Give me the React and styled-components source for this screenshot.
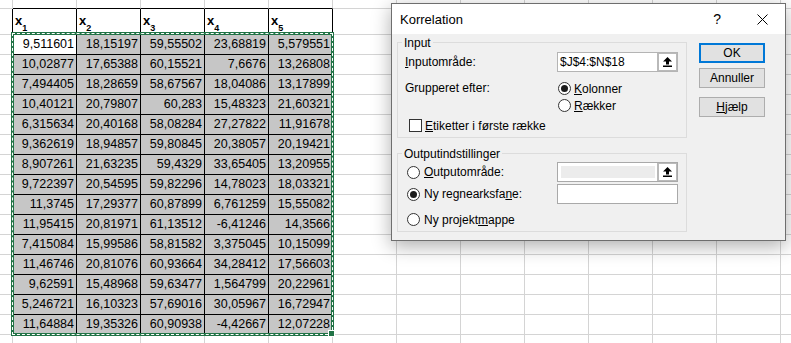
import React from 'react';
import styled, {createGlobalStyle} from 'styled-components';

const GlobalStyle = createGlobalStyle`
  html, body {
    margin: 0;
    padding: 0;
    background: #fff;
    overflow: hidden;
  }
`;

const data = [
  ['9,511601', '18,15197', '59,55502', '23,68819', '5,579551'],
  ['10,02877', '17,65388', '60,15521', '7,6676', '13,26808'],
  ['7,494405', '18,28659', '58,67567', '18,04086', '13,17899'],
  ['10,40121', '20,79807', '60,283', '15,48323', '21,60321'],
  ['6,315634', '20,40168', '58,08284', '27,27822', '11,91678'],
  ['9,362619', '18,94857', '59,80845', '20,38057', '20,19421'],
  ['8,907261', '21,63235', '59,4329', '33,65405', '13,20955'],
  ['9,722397', '20,54595', '59,82296', '14,78023', '18,03321'],
  ['11,3745', '17,29377', '60,87899', '6,761259', '15,55082'],
  ['11,95415', '20,81971', '61,13512', '-6,41246', '14,3566'],
  ['7,415084', '15,99586', '58,81582', '3,375045', '10,15099'],
  ['11,46746', '20,81076', '60,93664', '34,28412', '17,56603'],
  ['9,62591', '15,48968', '59,63477', '1,564799', '20,22961'],
  ['5,246721', '16,10323', '57,69016', '30,05967', '16,72947'],
  ['11,64884', '19,35326', '60,90938', '-4,42667', '12,07228'],
];

const COLS = 14;
const ROWS = 18;

const Sheet = styled.div`
  position: relative;
  width: 791px;
  height: 343px;
  overflow: hidden;
  display: grid;
  grid-template-columns: 13px repeat(13, 64px);
  grid-template-rows: 9px 26px repeat(16, 20px);
`;

const Cell = styled.div`
  box-sizing: border-box;
  border-right: 1px solid ${(p) => (p.$rightDark ? '#000' : '#d4d4d4')};
  border-bottom: 1px solid ${(p) => (p.$bottomDark ? '#000' : '#d4d4d4')};
  background: ${(p) => p.$fill || '#fff'};
  font: 12.5px/19px 'Liberation Sans', Arial, sans-serif;
  color: #000;
  text-align: right;
  padding-right: 2px;
  white-space: nowrap;
  overflow: hidden;
`;

const HeaderCell = styled(Cell)`
  display: flex;
  align-items: flex-end;
  padding: 0 0 6px 2px;
  font-size: 13px;
  font-weight: bold;
  line-height: 14px;
  text-align: left;

  sub {
    font-size: 9px;
    vertical-align: -3px;
    line-height: 0;
  }
`;

const Selection = styled.div`
  position: absolute;
  left: 11px;
  top: 32px;
  width: 323px;
  height: 304px;
  box-sizing: border-box;
  border: 3px solid #217346;
  pointer-events: none;

  &::after {
    content: '';
    position: absolute;
    inset: -2px;
    border: 1px dashed #fff;
  }
`;

const FillHandle = styled.div`
  position: absolute;
  right: -4px;
  bottom: -4px;
  width: 5px;
  height: 5px;
  background: #217346;
  border: 1px solid #fff;
  z-index: 1;
`;

/* dialog */

const Dialog = styled.div`
  position: absolute;
  left: 391px;
  top: 3px;
  width: 395px;
  height: 238px;
  box-sizing: border-box;
  border: 1px solid #6e6e6e;
  background: #f0f0f0;
  box-shadow: 0 5px 18px rgba(0, 0, 0, 0.32);
  display: flex;
  flex-direction: column;
  font: 12px 'Liberation Sans', Arial, sans-serif;
  color: #000;
`;

const TitleBar = styled.div`
  height: 30px;
  background: #fff;
  display: flex;
  align-items: center;
  padding: 0 17px 0 8px;
`;

const Title = styled.div`
  flex: 1;
  font-size: 13px;
`;

const HelpMark = styled.span`
  font-size: 14px;
  margin-right: 36px;
`;

const Body = styled.div`
  flex: 1;
  display: flex;
  padding: 8px 20px 0 5px;
  gap: 12px;
`;

const LeftCol = styled.div`
  width: 290px;
  display: flex;
  flex-direction: column;
  gap: 15px;
`;

const GroupBox = styled.div`
  position: relative;
  box-sizing: border-box;
  height: ${(p) => p.$h}px;
  border: 1px solid #dcdcdc;
  padding: ${(p) => p.$pt}px 8px 0 7px;
`;

const Caption = styled.span`
  position: absolute;
  top: -7px;
  left: 4px;
  padding: 0 2px;
  background: #f0f0f0;
  line-height: 14px;
`;

const Row = styled.div`
  display: flex;
  align-items: ${(p) => p.$align || 'center'};
  justify-content: space-between;
  height: ${(p) => p.$h || 20}px;
  margin-top: ${(p) => p.$mt || 0}px;
`;

const Label = styled.span`
  line-height: 17px;
`;

const Stack = styled.div`
  width: 121px;
  display: flex;
  flex-direction: column;
`;

const Option = styled.label`
  display: flex;
  align-items: center;
  gap: ${(p) => p.$gap || 4}px;
  height: 17px;
  margin-left: ${(p) => p.$indent || 0}px;
`;

const Radio = styled.span`
  position: relative;
  width: 13px;
  height: 13px;
  box-sizing: border-box;
  border: 1px solid #333;
  border-radius: 50%;
  background: #fff;

  &::after {
    content: '';
    display: ${(p) => (p.$checked ? 'block' : 'none')};
    position: absolute;
    left: 2px;
    top: 2px;
    width: 7px;
    height: 7px;
    border-radius: 50%;
    background: #1b1b1b;
  }
`;

const Check = styled.span`
  width: 13px;
  height: 13px;
  box-sizing: border-box;
  border: 1px solid #333;
  background: #fff;
`;

const TextBox = styled.div`
  width: 121px;
  height: ${(p) => p.$h || 20}px;
  box-sizing: border-box;
  border: 1px solid ${(p) => (p.$strong ? '#b4b4b4' : '#a9a9a9')};
  background: #fff;
  display: flex;
  align-items: stretch;
`;

const Field = styled.div`
  flex: 1;
  padding-left: 2px;
  line-height: 18px;
  font-size: 12px;
  margin: ${(p) => (p.$disabled ? '3px 2px 3px 3px' : '0')};
  background: ${(p) => (p.$disabled ? '#ececec' : 'transparent')};
`;

const RefButton = styled.div`
  width: 20px;
  box-sizing: border-box;
  border: 2px solid #b9b9b9;
  border-right-width: 1px;
  border-top-width: 1px;
  border-bottom-width: 1px;
  background: #fff;
  display: flex;
  align-items: center;
  justify-content: center;
`;

const ButtonCol = styled.div`
  width: 66px;
  display: flex;
  flex-direction: column;
  margin-top: 1px;
`;

const Button = styled.div`
  height: 20px;
  box-sizing: border-box;
  border: ${(p) => (p.$primary ? '2px solid #0078d7' : '1px solid #adadad')};
  background: #e1e1e1;
  display: flex;
  align-items: center;
  justify-content: center;
  margin-top: ${(p) => p.$mt || 0}px;
  font-size: 12px;
`;

const RefArrow = () => (
  <svg width="9" height="10" viewBox="0 0 9 10">
    <path d="M4.5 0 L9 4.5 L6 4.5 L6 7.5 L3 7.5 L3 4.5 L0 4.5 Z" fill="#000" />
    <rect x="0" y="8.5" width="9" height="1.5" fill="#000" />
  </svg>
);

const CloseIcon = () => (
  <svg width="11" height="11" viewBox="0 0 11 11">
    <path d="M0.5 0.5 L10.5 10.5 M10.5 0.5 L0.5 10.5" stroke="#000" strokeWidth="1" />
  </svg>
);

const inTable = (r, c) => r >= 1 && r <= 16 && c >= 1 && c <= 5;

function renderCells() {
  const cells = [];
  for (let r = 0; r < ROWS; r++) {
    for (let c = 0; c < COLS; c++) {
      const rightDark = inTable(r, c) || inTable(r, c + 1);
      const bottomDark = inTable(r, c) || inTable(r + 1, c);
      const key = `${r}-${c}`;
      if (r === 1 && c >= 1 && c <= 5) {
        cells.push(
          <HeaderCell key={key} $rightDark={rightDark} $bottomDark={bottomDark}>
            x<sub>{c}</sub>
          </HeaderCell>
        );
      } else if (r >= 2 && r <= 16 && c >= 1 && c <= 5) {
        const active = r === 2 && c === 1;
        cells.push(
          <Cell
            key={key}
            $rightDark={rightDark}
            $bottomDark={bottomDark}
            $fill={active ? '#fff' : '#c6c6c6'}
          >
            {data[r - 2][c - 1]}
          </Cell>
        );
      } else {
        cells.push(<Cell key={key} $rightDark={rightDark} $bottomDark={bottomDark} />);
      }
    }
  }
  return cells;
}

export default function App() {
  return (
    <>
      <GlobalStyle />
      <Sheet>
        {renderCells()}
        <Selection>
          <FillHandle />
        </Selection>

        <Dialog>
          <TitleBar>
            <Title>Korrelation</Title>
            <HelpMark>?</HelpMark>
            <CloseIcon />
          </TitleBar>
          <Body>
            <LeftCol>
              <GroupBox $h={96} $pt={9}>
                <Caption>Input</Caption>
                <Row>
                  <Label><u>I</u>nputområde:</Label>
                  <TextBox $strong>
                    <Field>$J$4:$N$18</Field>
                    <RefButton><RefArrow /></RefButton>
                  </TextBox>
                </Row>
                <Row $h={34} $mt={8} $align="flex-start">
                  <Label>Grupperet efter:</Label>
                  <Stack>
                    <Option $indent={1} $gap={3}>
                      <Radio $checked />
                      <span><u>K</u>olonner</span>
                    </Option>
                    <Option $indent={1} $gap={3}>
                      <Radio />
                      <span><u>R</u>ækker</span>
                    </Option>
                  </Stack>
                </Row>
                <Row $h={17} $mt={3}>
                  <Option $indent={4} $gap={3}>
                    <Check />
                    <span><u>E</u>tiketter i første række</span>
                  </Option>
                </Row>
              </GroupBox>

              <GroupBox $h={79} $pt={8}>
                <Caption>Outputindstillinger</Caption>
                <Row>
                  <Option $indent={2}>
                    <Radio />
                    <span><u>O</u>utputområde:</span>
                  </Option>
                  <TextBox>
                    <Field $disabled />
                    <RefButton><RefArrow /></RefButton>
                  </TextBox>
                </Row>
                <Row $mt={2}>
                  <Option $indent={2}>
                    <Radio $checked />
                    <span>Ny regnearksfa<u>n</u>e:</span>
                  </Option>
                  <TextBox />
                </Row>
                <Row $h={17} $mt={7}>
                  <Option $indent={2}>
                    <Radio />
                    <span>Ny projekt<u>m</u>appe</span>
                  </Option>
                </Row>
              </GroupBox>
            </LeftCol>

            <ButtonCol>
              <Button $primary>OK</Button>
              <Button $mt={5}>Annuller</Button>
              <Button $mt={9}><span><u>H</u>jælp</span></Button>
            </ButtonCol>
          </Body>
        </Dialog>
      </Sheet>
    </>
  );
}
